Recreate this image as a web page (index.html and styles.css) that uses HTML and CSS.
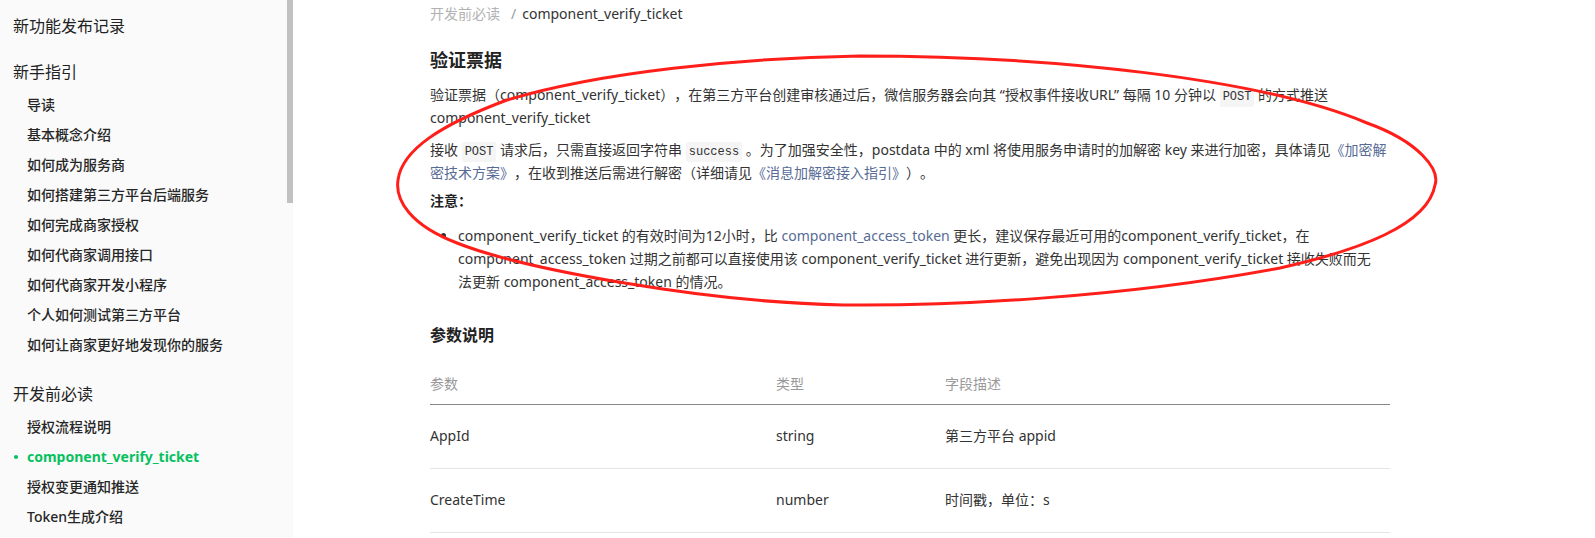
FILE: index.html
```html
<!DOCTYPE html>
<html lang="zh-CN">
<head>
    <meta charset="UTF-8">
    <meta name="viewport" content="width=device-width, initial-scale=1.0">
    <title>component_verify_ticket</title>
    <link rel="stylesheet" href="styles.css">
</head>
<body>

    <div class="page">
        <!-- Left menu -->
        <nav class="sidebar">
            <div class="nav-group">
                <div class="nav-title">新功能发布记录</div>
            </div>
            <div class="nav-group">
                <div class="nav-title">新手指引</div>
                <ul class="nav-list">
                    <li>导读</li>
                    <li>基本概念介绍</li>
                    <li>如何成为服务商</li>
                    <li>如何搭建第三方平台后端服务</li>
                    <li>如何完成商家授权</li>
                    <li>如何代商家调用接口</li>
                    <li>如何代商家开发小程序</li>
                    <li>个人如何测试第三方平台</li>
                    <li>如何让商家更好地发现你的服务</li>
                </ul>
            </div>
            <div class="nav-group">
                <div class="nav-title">开发前必读</div>
                <ul class="nav-list">
                    <li>授权流程说明</li>
                    <li class="active">component_verify_ticket</li>
                    <li>授权变更通知推送</li>
                    <li>Token生成介绍</li>
                </ul>
            </div>
            <div class="scroll-thumb"></div>
        </nav>

        <!-- Document -->
        <main class="content">
            <div class="doc">
                <div class="breadcrumb">
                    <span>开发前必读</span><span class="sep">/</span><span class="current">component_verify_ticket</span>
                </div>

                <h2 class="title">验证票据</h2>
                <p>验证票据（component_verify_ticket），在第三方平台创建审核通过后，微信服务器会向其 “授权事件接收URL” 每隔 10 分钟以 <code>POST</code> 的方式推送 component_verify_ticket</p>
                <p>接收 <code>POST</code> 请求后，只需直接返回字符串 <code>success</code> 。为了加强安全性，postdata 中的 xml 将使用服务申请时的加解密 key 来进行加密，具体请见<a href="#">《加密解密技术方案》</a>，在收到推送后需进行解密（详细请见<a href="#">《消息加解密接入指引》</a>）。</p>
                <p class="note"><strong>注意：</strong></p>
                <ul class="tips">
                    <li>component_verify_ticket 的有效时间为12小时，比 <a href="#">component_access_token</a> 更长，建议保存最近可用的component_verify_ticket，在 component_access_token 过期之前都可以直接使用该 component_verify_ticket 进行更新，避免出现因为 component_verify_ticket 接收失败而无法更新 component_access_token 的情况。</li>
                </ul>

                <h3 class="sub">参数说明</h3>
                <table class="params">
                    <colgroup>
                        <col class="col-name">
                        <col class="col-type">
                        <col>
                    </colgroup>
                    <thead>
                        <tr><th>参数</th><th>类型</th><th>字段描述</th></tr>
                    </thead>
                    <tbody>
                        <tr><td>AppId</td><td>string</td><td>第三方平台 appid</td></tr>
                        <tr><td>CreateTime</td><td>number</td><td>时间戳，单位：s</td></tr>
                    </tbody>
                </table>
            </div>
        </main>
    </div>

    <!-- red hand-drawn circle over the text -->
    <svg class="mark" viewBox="0 0 1595 538" xmlns="http://www.w3.org/2000/svg">
        <path d="M860 56 C1050 56, 1260 78, 1367 123 C1420 142, 1440 170, 1435 185 C1428 225, 1360 250, 1280 268 C1120 298, 950 306, 843 305 C700 302, 520 268, 457 243 C410 225, 395 200, 398 180 C402 150, 440 125, 507 100 C600 72, 740 58, 860 56 Z" fill="none" stroke="#ff1f1a" stroke-width="3"/>
    </svg>

</body>
</html>
```

FILE: styles.css
```css
body {
    margin: 0;
    font-family: "Noto Sans", "Noto Sans CJK SC", sans-serif;
    color: #333;
    background-color: #fff;
    text-spacing-trim: space-all;
}

.page {
    display: flex;
    height: 100vh;
    overflow: hidden;
}

/* Sidebar */
.sidebar {
    position: relative;
    width: 293px;
    flex: none;
    height: 100%;
    overflow: hidden;
    box-sizing: border-box;
    padding: 14px 6px 0 13px;
    background-color: #fafafa;
}

.scroll-thumb {
    position: absolute;
    top: 0;
    right: 0;
    width: 6px;
    height: 203px;
    background-color: #c1c1c1;
}

.nav-group {
    margin-bottom: 22px;
}

.nav-title {
    font-size: 16px;
    line-height: 24px;
    color: #222;
}

.nav-list {
    list-style: none;
    margin: 6px 0 3px;
    padding: 0 0 0 14px;
}

.nav-list li {
    position: relative;
    font-size: 14px;
    line-height: 30px;
    font-weight: 500;
    color: #262626;
}

.nav-list li.active {
    color: #07c160;
    font-weight: 700;
}

.nav-list li.active::before {
    content: "";
    position: absolute;
    left: -13px;
    top: 13px;
    width: 4px;
    height: 4px;
    border-radius: 50%;
    background-color: #07c160;
}

/* Content */
.content {
    flex: 1;
    padding: 3px 0 0 137px;
}

.doc {
    width: 960px;
}

.breadcrumb {
    font-size: 14px;
    line-height: 22px;
    color: #b2b2b2;
}

.breadcrumb .sep {
    margin: 0 6px 0 11px;
    color: #999;
}

.breadcrumb .current {
    color: #333;
}

.title {
    font-size: 18px;
    line-height: 26px;
    font-weight: 700;
    color: #222;
    margin: 22px 0 10px;
}

.doc p {
    font-size: 14px;
    line-height: 23px;
    margin: 0;
}

.doc p + p {
    margin-top: 9px;
}

.doc p.note {
    margin-top: 5px;
}

.note strong {
    color: #222;
}

.doc a {
    color: #576b95;
    text-decoration: none;
}

code {
    font-family: "Liberation Mono", monospace;
    font-size: 12px;
    line-height: 14px;
    padding: 3px 3px;
    background-color: #f5f5f5;
    border-radius: 2px;
}

.tips {
    margin: 12px 0 0;
    padding: 0 8px 0 28px;
    font-size: 14px;
    line-height: 23px;
}

.sub {
    font-size: 16px;
    line-height: 24px;
    font-weight: 700;
    color: #222;
    margin: 30px 0 25px;
}

.params {
    width: 960px;
    border-collapse: collapse;
    font-size: 14px;
    line-height: 23px;
}

.col-name {
    width: 346px;
}

.col-type {
    width: 169px;
}

.params th {
    text-align: left;
    font-weight: 400;
    color: #999;
    padding: 0 0 9px;
    border-bottom: 1px solid #888;
}

.params td {
    padding: 19px 0 21px;
    border-bottom: 1px solid #e5e5e5;
}

/* Annotation layer */
.mark {
    position: absolute;
    top: 0;
    left: 0;
    width: 1595px;
    height: 538px;
    pointer-events: none;
}
```
